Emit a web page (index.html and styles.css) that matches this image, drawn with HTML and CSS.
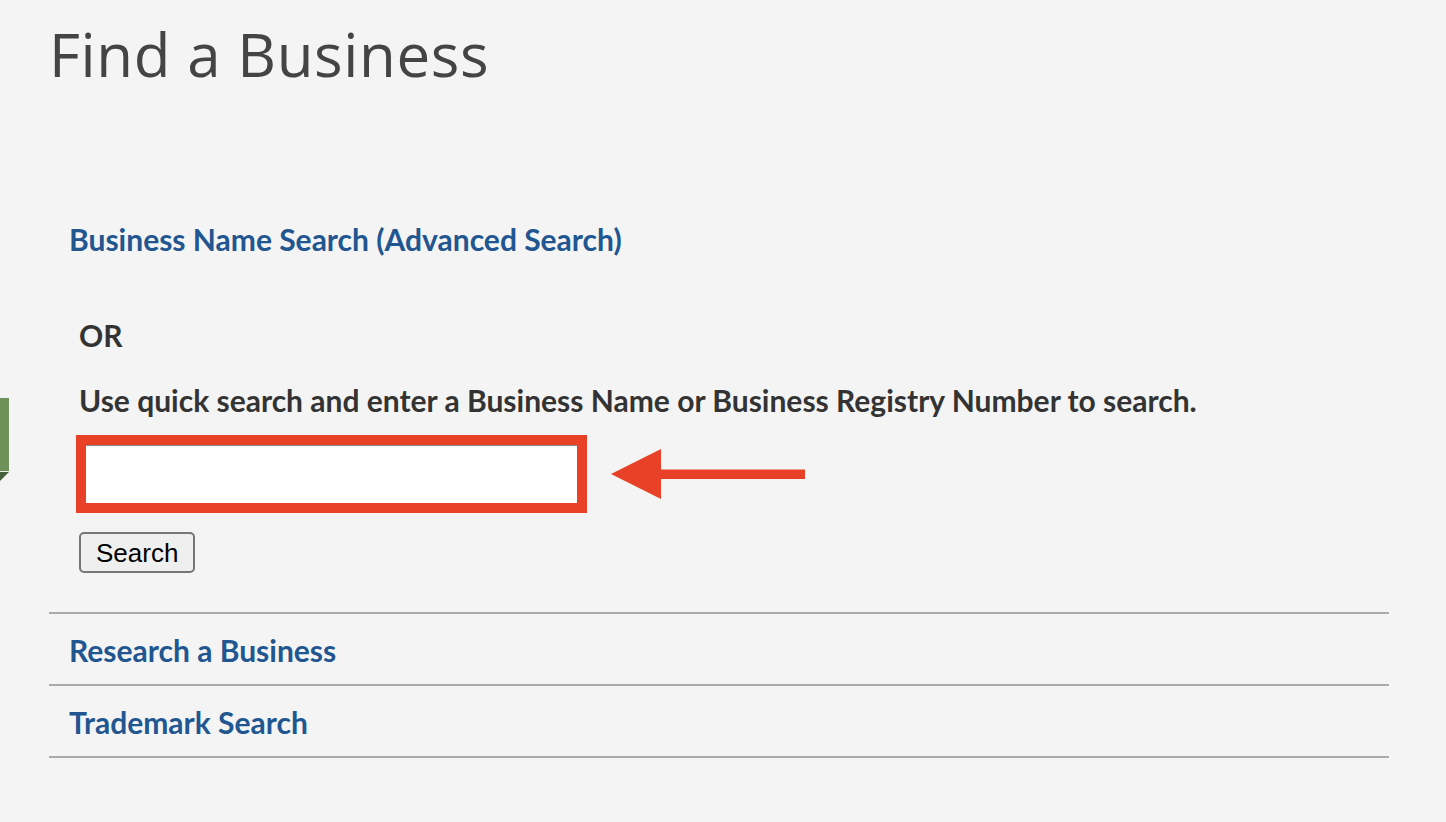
FILE: index.html
```html
<!DOCTYPE html>
<html lang="en">
<head>
<meta charset="utf-8">
<title>Find a Business</title>
<link rel="stylesheet" href="styles.css">
</head>
<body>
<div class="side-tab"><span class="side-tab-fold"></span></div>
<main class="page">
  <h1 class="page-title">Find a Business</h1>
  <section class="item item-open">
    <a class="item-link" href="#">Business Name Search (Advanced Search)</a>
    <div class="quick">
      <p class="quick-or">OR</p>
      <p class="quick-text">Use quick search and enter a Business Name or Business Registry Number to search.</p>
      <div class="quick-row">
        <span class="highlight"><input class="quick-input" type="text" aria-label="Business name or registry number"></span>
        <svg class="arrow" width="196" height="52" viewBox="0 0 196 52" aria-hidden="true">
          <polygon points="1,26 51,1 51,51" fill="#e84127"/>
          <rect x="48" y="21.5" width="147" height="9.5" fill="#e84127"/>
        </svg>
      </div>
      <button class="quick-btn" type="button">Search</button>
    </div>
  </section>
  <section class="item">
    <a class="item-link" href="#">Research a Business</a>
  </section>
  <section class="item">
    <a class="item-link" href="#">Trademark Search</a>
  </section>
</main>
</body>
</html>
```

FILE: styles.css
```css
html, body {
  margin: 0;
  padding: 0;
  background: #f4f4f4;
}

body {
  font-family: "Lato", "Open Sans", sans-serif;
  color: #333;
}

.side-tab {
  position: absolute;
  left: 0;
  top: 398px;
  width: 9px;
  height: 73px;
  background: #6e915a;
  border-bottom: 1px solid #e8eee4;
}

.side-tab-fold {
  position: absolute;
  left: 0;
  top: 74px;
  width: 0;
  height: 0;
  border-top: 9px solid #44603a;
  border-right: 9px solid transparent;
}

.page {
  margin-left: 49px;
  width: 1340px;
}

.page-title {
  margin: 18px 0 0 0;
  font-family: "Open Sans", sans-serif;
  font-weight: 400;
  font-size: 60px;
  line-height: 72px;
  color: #444;
  letter-spacing: 0.6px;
}

.item {
  padding: 18px 20px 16px 20px;
  border-bottom: 2px solid #ababab;
}

.item-open {
  margin-top: 131px;
  padding-top: 0;
  padding-bottom: 39px;
}

.item-link {
  display: block;
  font-weight: 700;
  font-size: 30px;
  line-height: 36px;
  color: #225690;
  text-decoration: none;
}

.quick {
  padding-left: 10px;
}

.quick-or,
.quick-text {
  margin: 0;
  font-weight: 700;
  font-size: 30px;
  line-height: 36px;
  color: #333;
}

.quick-or {
  margin-top: 60px;
}

.quick-text {
  margin-top: 29px;
}

.quick-row {
  display: flex;
  align-items: center;
  gap: 23px;
  margin-top: 17px;
  margin-left: -3px;
}

.highlight {
  display: block;
  border: 10px solid #e84127;
  line-height: 0;
}

.quick-input {
  display: block;
  width: 491px;
  height: 58px;
  box-sizing: border-box;
  margin: 0;
  border: none;
  border-top: 1px solid #8a8a8a;
  background: #fff;
  outline: none;
  padding: 0 6px;
}

.arrow {
  display: block;
}

.quick-btn {
  display: block;
  margin-top: 19px;
  height: 41px;
  box-sizing: border-box;
  padding: 0 15px;
  font-family: "Liberation Sans", Arial, sans-serif;
  font-size: 26px;
  line-height: 30px;
  color: #000;
  background: #efefef;
  border: 2px solid #767676;
  border-radius: 5px;
}
```
